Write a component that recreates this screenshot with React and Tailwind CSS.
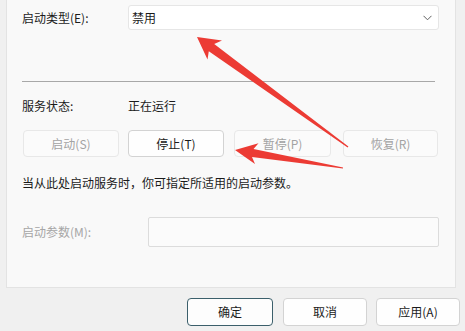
import React from 'react'

function Btn({ label, disabled, primary, className = '' }) {
  const base = 'flex items-center justify-center rounded-[4px] border text-[12px] leading-none'
  const tone = disabled
    ? 'bg-[#fbfbfb] border-[#e8e8e8] text-[#a3a3a3]'
    : primary
      ? 'bg-[#fdfdfd] border-[#3b5f6b] text-[#1b1b1b]'
      : 'bg-[#fefefe] border-[#d3d3d3] text-[#1b1b1b]'
  return <div className={`${base} ${tone} ${className}`}>{label}</div>
}

function Arrows() {
  // red markup arrows drawn over the dialog
  return (
    <svg className="absolute inset-0 pointer-events-none" width="465" height="331" viewBox="0 0 465 331">
      <polygon
        fill="#ec3b34"
        points="197,37 222,40.5 214.2,44 348.4,146.4 347.6,147.6 208.8,51.2 207.5,59.5"
      />
      <polygon
        fill="#ec3b34"
        points="235,150 258.5,143.2 253.5,149 343.1,167.4 342.9,168.6 252,157 255,164"
      />
    </svg>
  )
}

export default function App() {
  return (
    <div className="relative w-[465px] h-[331px] overflow-hidden bg-[#f0f0f0] text-[#1b1b1b] font-[family-name:'Noto_Sans_CJK_SC','Noto_Sans',sans-serif]">
      <div className="ml-[6px] w-[450px] h-[288px] bg-[#f9f9f9] border-x border-b border-[#e3e3e3] px-[15px] pt-[5px]">
        {/* startup type */}
        <div className="flex items-center h-[25px]">
          <div className="w-[106px] text-[12px] leading-none">启动类型(E):</div>
          <div className="flex items-center justify-between w-[311px] h-[25px] bg-white border border-[#e6e6e6] rounded-[3px] pl-[3px] pr-[6px]">
            <span className="text-[12px] leading-none">禁用</span>
            <svg width="9" height="6" viewBox="0 0 9 6">
              <polyline points="0.5,0.8 4.5,4.8 8.5,0.8" fill="none" stroke="#606060" strokeWidth="1" />
            </svg>
          </div>
        </div>

        <div className="mt-[51px] w-[413px] h-px bg-[#a8a8a8]" />

        {/* service status */}
        <div className="flex items-center h-[14px] mt-[17px]">
          <div className="w-[106px] text-[12px] leading-none">服务状态:</div>
          <div className="text-[12px] leading-none">正在运行</div>
        </div>

        <div className="flex mt-[17px] h-[27px]">
          <Btn label="启动(S)" disabled className="ml-px w-[96px]" />
          <Btn label="停止(T)" className="ml-[9px] w-[96px]" />
          <Btn label="暂停(P)" disabled className="ml-[10px] w-[97px]" />
          <Btn label="恢复(R)" disabled className="ml-[12px] w-[95px]" />
        </div>

        <div className="mt-[20px] text-[12px] leading-none">当从此处启动服务时，你可指定所适用的启动参数。</div>

        <div className="flex items-center mt-[28px]">
          <div className="w-[126px] text-[12px] leading-none text-[#a6a6a6]">启动参数(M):</div>
          <div className="w-[291px] h-[30px] bg-[#fbfbfb] border border-[#dcdcdc] rounded-[2px]" />
        </div>
      </div>

      <div className="flex justify-end pr-[5px] mt-[10px]">
        <Btn label="确定" primary className="w-[86px] h-[28px]" />
        <Btn label="取消" className="ml-[10px] w-[84px] h-[28px]" />
        <Btn label="应用(A)" className="ml-[9px] w-[84px] h-[28px]" />
      </div>

      <Arrows />
    </div>
  )
}
